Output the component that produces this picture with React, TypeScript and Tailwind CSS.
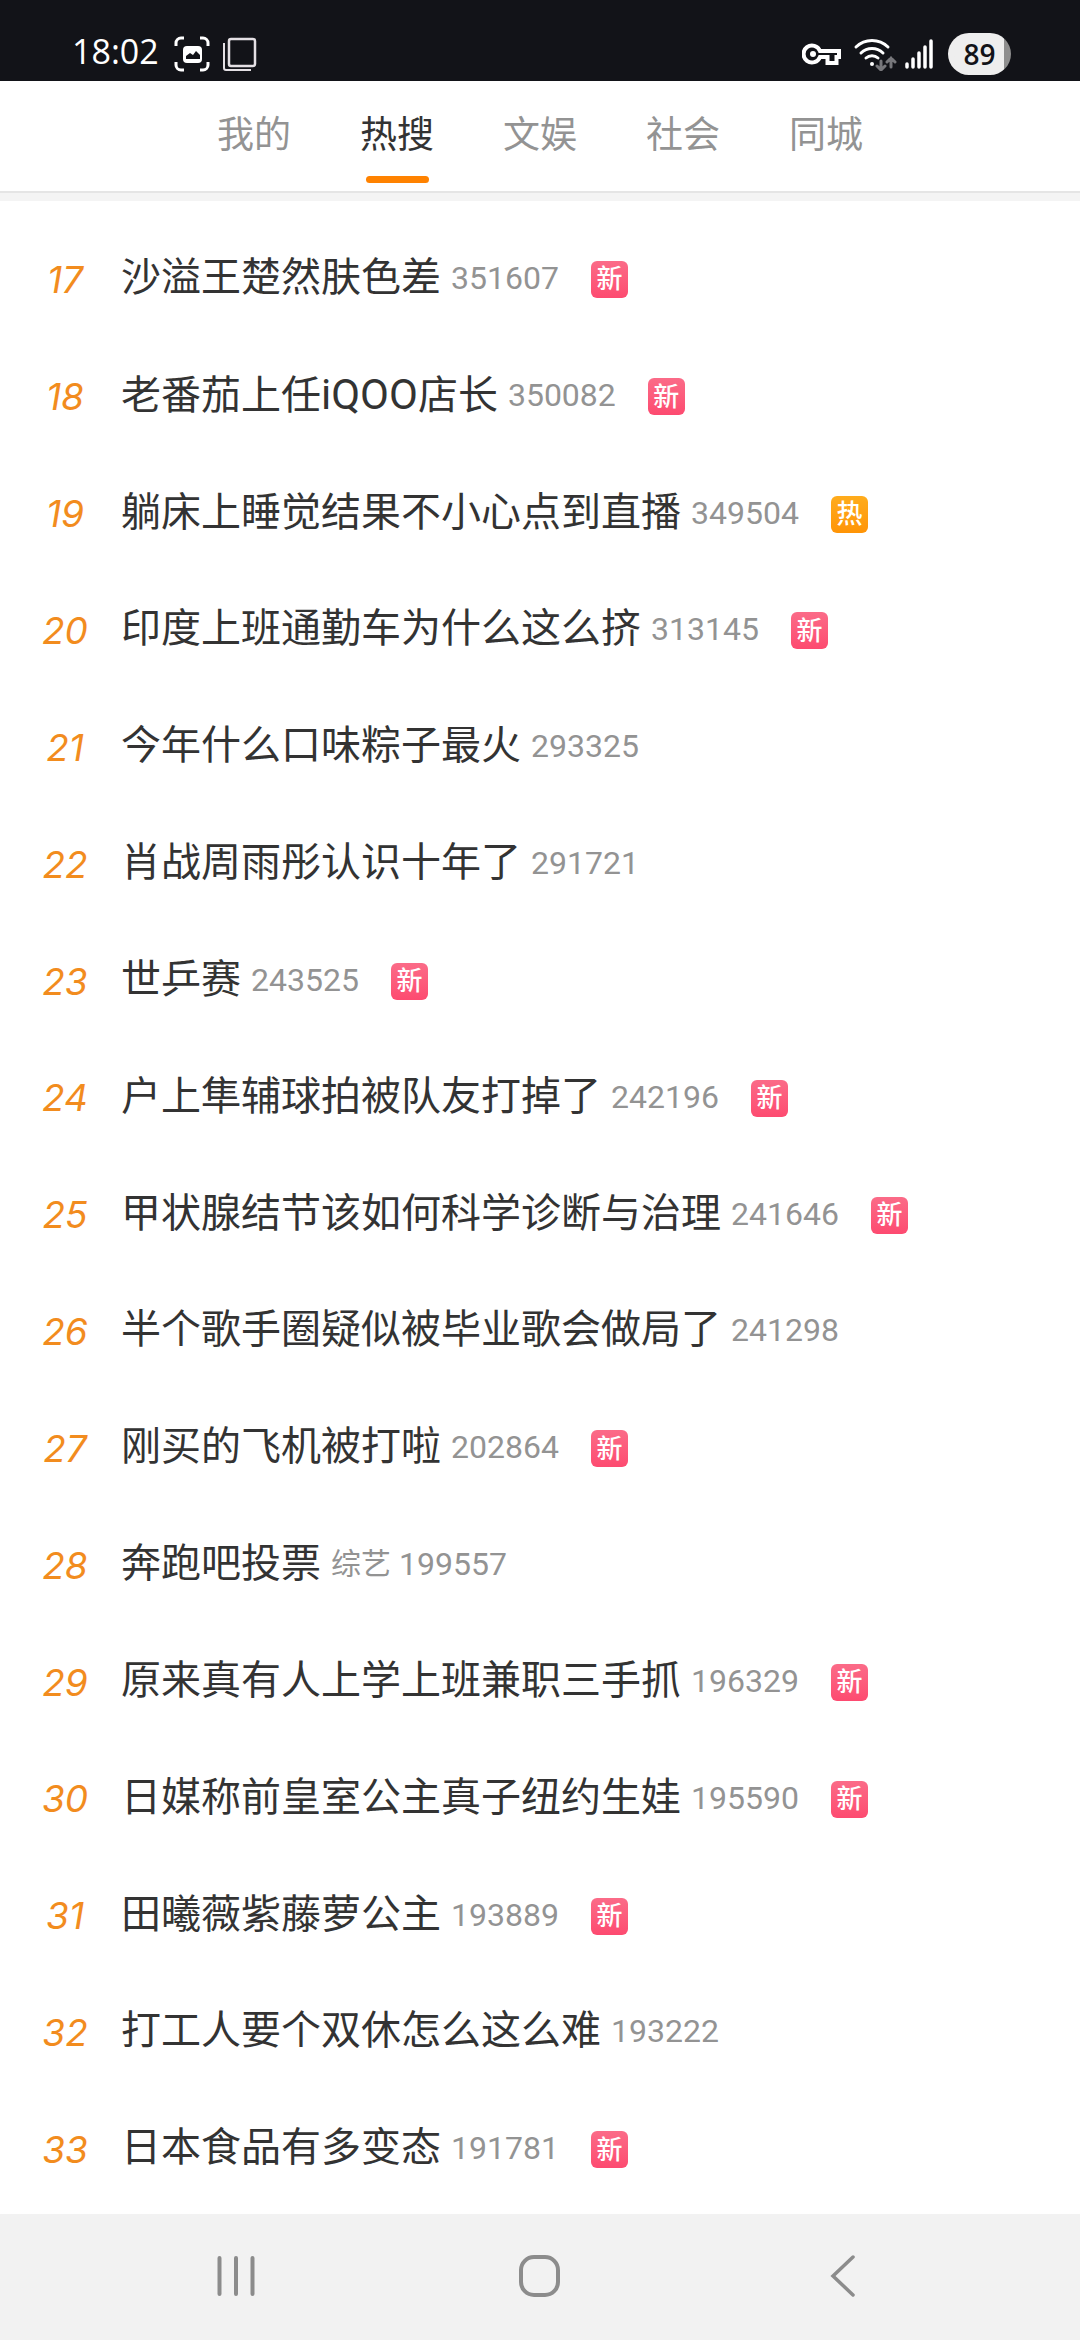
import React from 'react';

type Tag = '新' | '热';

interface Topic {
  rank: number;
  title: string;
  heat: number;
  category?: string;
  tag?: Tag;
}

const tabs = ['我的', '热搜', '文娱', '社会', '同城'];

const topics: Topic[] = [
  { rank: 17, title: '沙溢王楚然肤色差', heat: 351607, tag: '新' },
  { rank: 18, title: '老番茄上任iQOO店长', heat: 350082, tag: '新' },
  { rank: 19, title: '躺床上睡觉结果不小心点到直播', heat: 349504, tag: '热' },
  { rank: 20, title: '印度上班通勤车为什么这么挤', heat: 313145, tag: '新' },
  { rank: 21, title: '今年什么口味粽子最火', heat: 293325 },
  { rank: 22, title: '肖战周雨彤认识十年了', heat: 291721 },
  { rank: 23, title: '世乒赛', heat: 243525, tag: '新' },
  { rank: 24, title: '户上隼辅球拍被队友打掉了', heat: 242196, tag: '新' },
  { rank: 25, title: '甲状腺结节该如何科学诊断与治理', heat: 241646, tag: '新' },
  { rank: 26, title: '半个歌手圈疑似被毕业歌会做局了', heat: 241298 },
  { rank: 27, title: '刚买的飞机被打啦', heat: 202864, tag: '新' },
  { rank: 28, title: '奔跑吧投票', heat: 199557, category: '综艺' },
  { rank: 29, title: '原来真有人上学上班兼职三手抓', heat: 196329, tag: '新' },
  { rank: 30, title: '日媒称前皇室公主真子纽约生娃', heat: 195590, tag: '新' },
  { rank: 31, title: '田曦薇紫藤萝公主', heat: 193889, tag: '新' },
  { rank: 32, title: '打工人要个双休怎么这么难', heat: 193222 },
  { rank: 33, title: '日本食品有多变态', heat: 191781, tag: '新' },
];

const StatusBar: React.FC = () => (
  <div className="flex h-[81px] items-end justify-between bg-[#121318] pl-[72px] pr-[69px] text-white">
    <div className="flex h-[54px] items-center">
      <span className="w-[86px] pb-[6px] font-['Open_Sans',sans-serif] text-[34px] leading-[48px] font-medium">18:02</span>
      {/* Screenshot */}
      <svg className="ml-4 h-9 w-9" viewBox="0 0 36 36" fill="none">
        <path
          d="M2 10V7a5 5 0 0 1 5-5h3M26 2h3a5 5 0 0 1 5 5v3M34 26v3a5 5 0 0 1-5 5h-3M10 34H7a5 5 0 0 1-5-5v-3"
          stroke="currentColor"
          strokeWidth="3"
        />
        <rect x="9" y="10" width="19" height="17" rx="4" fill="currentColor" />
        <path d="M12 23v-3l4-3 3 2 3-4 4 4v4z" fill="#121318" />
      </svg>
      {/* Stacked windows */}
      <svg className="ml-3 h-9 w-9" viewBox="0 0 36 36" fill="none" stroke="#e4e0e4" strokeWidth="2">
        <rect x="7" y="3" width="26" height="27" rx="2" strokeWidth="2.5" />
        <path d="M2 7v25a2 2 0 0 0 2 2h25" />
      </svg>
    </div>

    <div className="flex h-[54px] items-center">
      {/* VPN key */}
      <svg className="h-6 w-[40px]" viewBox="0 0 40 24" fill="none" stroke="currentColor" strokeWidth="4">
        <path d="M18 9h19v6h-2.500v6h-9v-6H18a8.500 8.500 0 1 1 0-6z" />
        <circle cx="11" cy="12" r="3" fill="currentColor" stroke="none" />
      </svg>
      {/* Wi-Fi */}
      <svg className="ml-[11px] h-[34px] w-[44px]" viewBox="0 0 44 34" fill="none" strokeLinecap="round">
        <path d="M3 10a23 23 0 0 1 32 0M8 16a16 16 0 0 1 22 0M13 21a9 9 0 0 1 12 0" stroke="currentColor" strokeWidth="3" />
        <circle cx="19" cy="27" r="2" fill="currentColor" />
        <path d="M28 24v9M24 29l4 4 4-4M38 30v-9M34 25l4-4 4 4" stroke="#77777b" strokeWidth="3" />
      </svg>
      {/* Signal */}
      <svg className="ml-2 h-[30px] w-7" viewBox="0 0 28 30" stroke="currentColor" strokeWidth="3.500" strokeLinecap="round">
        <path d="M2 25v3M8 20v8M14 14v14M20 8v20M26 2v26" />
      </svg>
      <div className="ml-[15px] flex h-[42px] w-[63px] items-center justify-center rounded-full bg-linear-to-r from-[#eeeeee] from-89% to-[#8e8e8e] to-89% font-['Open_Sans',sans-serif] text-[28px] font-semibold text-[#121318]">
        89
      </div>
    </div>
  </div>
);

const TabBar: React.FC = () => (
  <nav className="flex h-[112px] justify-center gap-[69px] border-b-2 border-[#e5e5e5] bg-white">
    {tabs.map(tab => {
      const active = tab === '热搜';
      return (
        <button key={tab} className={`flex flex-col items-center text-[37px] ${active ? 'text-[#333333]' : 'text-[#939393]'}`}>
          <span className="mt-5 h-[75px] leading-[70px]">{tab}</span>
          {active && <span className="h-[7px] w-[63px] rounded-full bg-[#ff8200]" />}
        </button>
      );
    })}
  </nav>
);

// Latin words are set a little larger than the Chinese around them
const Title: React.FC<{ text: string }> = ({ text }) => (
  <span className="text-[40px] text-[#333333]">
    {text.split(/([A-Za-z]+)/).map((part, i) => (i % 2 ? <span key={i} className="text-[42px]">{part}</span> : part))}
  </span>
);

const HotTag: React.FC<{ tag: Tag }> = ({ tag }) => (
  <span
    className={`ml-8 flex h-[37px] w-[37px] items-center justify-center rounded-md bg-linear-to-b text-[26px] leading-none font-medium text-white ${tag === '热' ? 'from-[#ffac1c] to-[#ff9406]' : 'from-[#fb6b88] to-[#fd4a70]'}`}
  >
    {tag}
  </span>
);

export default function App() {
  return (
    <div className="flex min-h-screen flex-col bg-white font-[Roboto,'Noto_Sans_CJK_SC',sans-serif]">
      <StatusBar />
      <TabBar />
      <div className="h-2 bg-[#f4f4f4]" />

      <ol className="flex flex-1 flex-col pt-5 pb-[6px]">
        {topics.map(topic => (
          <li key={topic.rank} className="flex min-h-24 flex-1">
            <a href="#" className="flex flex-1 items-center">
              <span className="w-[121px] pl-[9px] text-center font-[Inter,sans-serif] text-[37px] text-[#f28c1e] italic">{topic.rank}</span>
              <span className="flex items-center pb-[3px] leading-[60px]">
                <Title text={topic.title} />
                {topic.category && <span className="-mr-[2px] ml-[10px] text-[30px] text-[#939393]">{topic.category}</span>}
                <span className="ml-[10px] text-[32px] text-[#939393]">{topic.heat}</span>
              </span>
              {topic.tag && <HotTag tag={topic.tag} />}
            </a>
          </li>
        ))}
      </ol>

      <div className="flex h-[126px] items-center justify-around bg-[#f2f2f2] px-[84px] pb-[2px] text-[#8c8c8c]">
        <button aria-label="最近任务">
          <svg className="h-12 w-12" viewBox="0 0 48 48" stroke="currentColor" strokeWidth="4" strokeLinecap="round">
            <path d="M7.500 6v36M24 6v36M40.500 6v36" />
          </svg>
        </button>
        <button aria-label="主屏幕">
          <svg className="h-12 w-12" viewBox="0 0 48 48" fill="none" stroke="currentColor" strokeWidth="4">
            <rect x="5" y="5" width="37" height="38" rx="13" />
          </svg>
        </button>
        <button aria-label="返回">
          <svg className="h-12 w-12" viewBox="0 0 48 48" fill="none" stroke="currentColor" strokeWidth="3.500" strokeLinecap="round">
            <path d="M33 5 13 24l20 19" />
          </svg>
        </button>
      </div>
    </div>
  );
}
